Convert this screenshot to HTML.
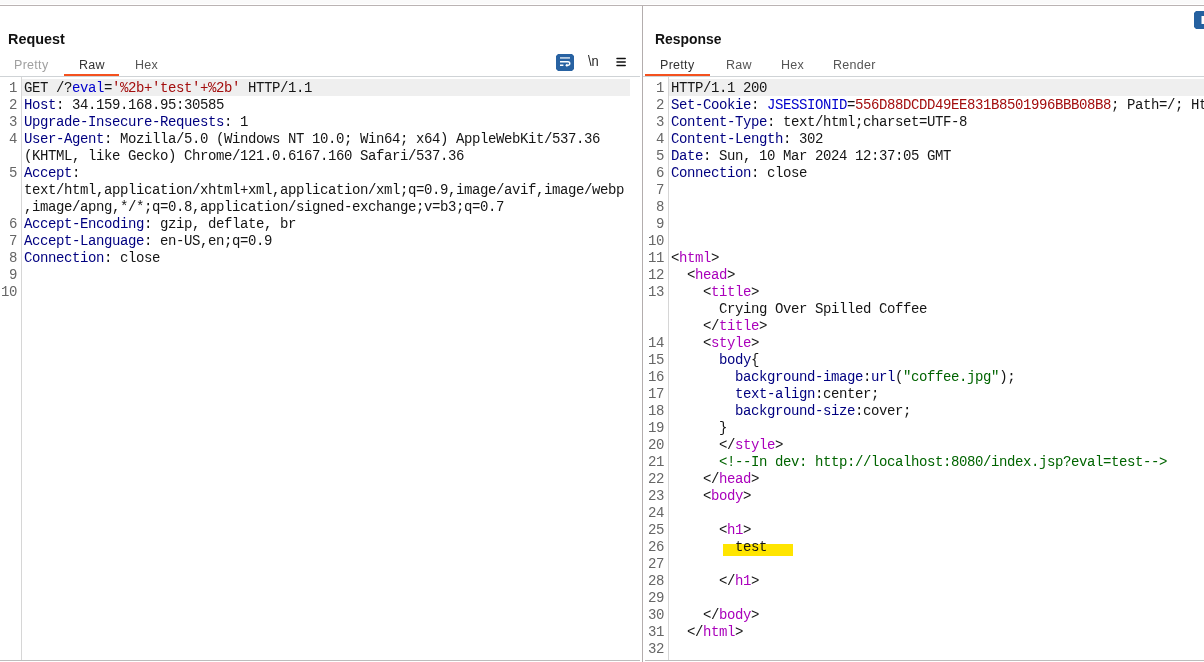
<!DOCTYPE html>
<html><head><meta charset="utf-8">
<style>
*{margin:0;padding:0;box-sizing:border-box}
html,body{width:1204px;height:662px;overflow:hidden;background:#fff}
body{position:relative;font-family:"Liberation Sans",sans-serif;-webkit-font-smoothing:antialiased}
.wrap{position:absolute;left:0;top:0;width:1204px;height:662px;will-change:transform}
.abs{position:absolute}
#topband{left:0;top:0;width:1204px;height:4px;background:#fafafa}
#topline{left:0;top:5px;width:1204px;height:1px;background:#bab3b3}
#divider{left:642px;top:6px;width:1px;height:656px;background:#b3adad}
.title{font-weight:bold;font-size:16px;color:#111;top:29.5px;line-height:19px;transform-origin:0 0}
.tab{font-size:12.5px;letter-spacing:0.3px;top:58px;line-height:14px;color:#555}
.uline{top:74px;height:2px;background:#f4511e}
.sep{top:76px;height:1px;background:#cfd3d6}
.botline{top:660px;height:1px;background:#bdbdbd}
.gutline{top:77px;width:1px;height:583px;background:#d6d6d6}
.hl{top:79px;height:17px;background:#efefef}
.ed{top:80px;font-family:"Liberation Mono",monospace;font-size:14px;letter-spacing:-0.4px;line-height:17px;color:#151515;white-space:pre}
.gut{top:80px;font-family:"Liberation Mono",monospace;font-size:14px;letter-spacing:-0.4px;line-height:17px;color:#666;white-space:pre;text-align:right}
.k{color:#000080}
.b{color:#0000cc}
.r{color:#a30d0d}
.t{color:#aa00bb}
.g{color:#006400}
.yl{background:#ffe600}
</style></head><body><div class="wrap">
<div class="abs" id="topband"></div>
<div class="abs" id="topline"></div>
<div class="abs" id="divider"></div>

<!-- Request panel -->
<div class="abs title" style="left:8px;transform:scale(0.9,0.96)">Request</div>
<div class="abs tab" style="left:14px;color:#a0a0a0">Pretty</div>
<div class="abs tab" style="left:79px;color:#333">Raw</div>
<div class="abs tab" style="left:135px">Hex</div>
<div class="abs uline" style="left:64px;width:55px"></div>
<div class="abs sep" style="left:0;width:640px"></div>
<div class="abs botline" style="left:0;width:640px"></div>
<div class="abs gutline" style="left:21px"></div>
<div class="abs hl" style="left:22px;width:608px"></div>

<!-- icons -->
<svg class="abs" style="left:556px;top:54px" width="18" height="17" viewBox="0 0 18 17">
<path d="M2 0H16L18 2V15L16 17H2L0 15V2Z" fill="#2862a2"/>
<rect x="4" y="3" width="10" height="1.8" fill="#b9cde2"/>
<path d="M4 7.8H12A1.75 1.75 0 0 1 12 11.3H10.5" stroke="#fff" stroke-width="1.5" fill="none"/>
<path d="M11.3 9.4L9.2 11.3L11.3 13.2Z" fill="#fff"/>
<rect x="4" y="10.5" width="3.4" height="1.5" fill="#fff"/>
</svg>
<div class="abs" style="left:588px;top:54px;font-size:14px;line-height:15px;color:#1a1a1a;transform:scaleX(0.92);transform-origin:0 0">\n</div>
<svg class="abs" style="left:616px;top:57px" width="11" height="11" viewBox="0 0 11 11">
<path d="M1 1.4H9.2M1 5H9.2M1 8.6H9.2" stroke="#111" stroke-width="1.5" stroke-linecap="round"/>
</svg>

<div class="abs gut" style="left:0;width:17px">1
2
3
4

5


6
7
8
9
10</div>
<div class="abs ed" style="left:24px">GET /?<span class="b">eval</span>=<span class="r">'%2b+'test'+%2b'</span> HTTP/1.1
<span class="k">Host</span>: 34.159.168.95:30585
<span class="k">Upgrade-Insecure-Requests</span>: 1
<span class="k">User-Agent</span>: Mozilla/5.0 (Windows NT 10.0; Win64; x64) AppleWebKit/537.36
(KHTML, like Gecko) Chrome/121.0.6167.160 Safari/537.36
<span class="k">Accept</span>:
text/html,application/xhtml+xml,application/xml;q=0.9,image/avif,image/webp
,image/apng,*/*;q=0.8,application/signed-exchange;v=b3;q=0.7
<span class="k">Accept-Encoding</span>: gzip, deflate, br
<span class="k">Accept-Language</span>: en-US,en;q=0.9
<span class="k">Connection</span>: close
</div>

<!-- Response panel -->
<div class="abs title" style="left:655px;transform:scale(0.87,0.96)">Response</div>
<div class="abs tab" style="left:660px;color:#333">Pretty</div>
<div class="abs tab" style="left:726px">Raw</div>
<div class="abs tab" style="left:781px">Hex</div>
<div class="abs tab" style="left:833px">Render</div>
<div class="abs uline" style="left:645px;width:65px"></div>
<div class="abs sep" style="left:643px;width:561px"></div>
<div class="abs botline" style="left:645px;width:559px"></div>
<div class="abs gutline" style="left:668px"></div>
<div class="abs hl" style="left:669px;width:535px"></div>
<svg class="abs" style="left:1194px;top:11px" width="10" height="18" viewBox="0 0 10 18">
<path d="M2 0H10V18H2L0 16V2Z" fill="#2561a0"/>
<rect x="7.5" y="5" width="2.5" height="8" fill="#fff"/>
</svg>

<div class="abs" style="left:723px;top:544px;width:70px;height:12px;background:#ffe500"></div>
<div class="abs gut" style="left:643px;width:21px">1
2
3
4
5
6
7
8
9
10
11
12
13


14
15
16
17
18
19
20
21
22
23
24
25
26
27
28
29
30
31
32</div>
<div class="abs ed" style="left:671px">HTTP/1.1 200
<span class="k">Set-Cookie</span>: <span class="b">JSESSIONID</span>=<span class="r">556D88DCDD49EE831B8501996BBB08B8</span>; Path=/; HttpOnly
<span class="k">Content-Type</span>: text/html;charset=UTF-8
<span class="k">Content-Length</span>: 302
<span class="k">Date</span>: Sun, 10 Mar 2024 12:37:05 GMT
<span class="k">Connection</span>: close




&lt;<span class="t">html</span>&gt;
  &lt;<span class="t">head</span>&gt;
    &lt;<span class="t">title</span>&gt;
      Crying Over Spilled Coffee
    &lt;/<span class="t">title</span>&gt;
    &lt;<span class="t">style</span>&gt;
      <span class="k">body</span>{
        <span class="k">background-image</span>:<span class="k">url</span>(<span class="g">"coffee.jpg"</span>);
        <span class="k">text-align</span>:center;
        <span class="k">background-size</span>:cover;
      }
      &lt;/<span class="t">style</span>&gt;
      <span class="g">&lt;!--In dev: http://localhost:8080/index.jsp?eval=test--&gt;</span>
    &lt;/<span class="t">head</span>&gt;
    &lt;<span class="t">body</span>&gt;

      &lt;<span class="t">h1</span>&gt;
        test

      &lt;/<span class="t">h1</span>&gt;

    &lt;/<span class="t">body</span>&gt;
  &lt;/<span class="t">html</span>&gt;
</div>
</div></body></html>
